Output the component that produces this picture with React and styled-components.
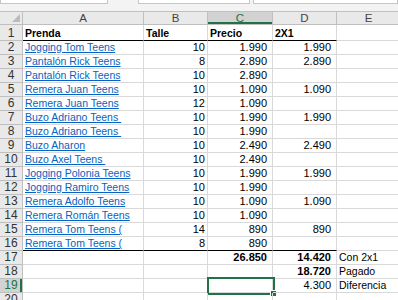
import React from 'react';
import styled, { createGlobalStyle } from 'styled-components';

const COLS = '23px 121px 64px 65px 64px 64px';
const GRID = '#d9d9d9';
const HEAD_LINE = '#bfbfbf';
const GREEN = '#217346';

const Global = createGlobalStyle`
  html, body { margin: 0; padding: 0; background: #fff; }
  body { font-family: 'Liberation Sans', Arial, sans-serif; }
`;

const Sheet = styled.div`
  width: 398px;
  height: 300px;
  overflow: hidden;
  display: flex;
  flex-direction: column;
  background: #fff;
`;

const TopStrip = styled.div`
  height: 12px;
  flex: none;
  display: flex;
  gap: 3px;
  background: #f3f3f3;
  border-bottom: 1px solid ${HEAD_LINE};
  box-sizing: border-box;
`;

const InputBox = styled.div`
  height: 3px;
  width: ${(p) => p.$w}px;
  flex: ${(p) => (p.$grow ? 1 : 'none')};
  margin-left: ${(p) => p.$ml || 0}px;
  background: #fff;
  border: 1px solid #c6c6c6;
  border-top: none;
`;

const Row = styled.div`
  display: grid;
  grid-template-columns: ${COLS};
  height: ${(p) => p.$h}px;
  flex: none;
`;

const Corner = styled.div`
  background: #e9e9e9;
  border-right: 1px solid ${HEAD_LINE};
  border-bottom: 1px solid ${HEAD_LINE};
  display: flex;
  align-items: flex-end;
  justify-content: flex-end;
  padding: 0 2px 2px 0;
`;

const ColHead = styled.div`
  background: ${(p) => (p.$active ? '#d2d2d2' : '#e9e9e9')};
  color: ${(p) => (p.$active ? GREEN : '#444')};
  border-right: 1px solid ${HEAD_LINE};
  border-bottom: 1px solid ${HEAD_LINE};
  box-shadow: ${(p) => (p.$active ? `inset 0 -2px 0 ${GREEN}` : 'none')};
  font-size: 11.5px;
  display: flex;
  align-items: center;
  justify-content: center;
`;

const RowHead = styled.div`
  background: ${(p) => (p.$active ? '#d2d2d2' : '#e9e9e9')};
  color: ${(p) => (p.$active ? GREEN : '#333')};
  border-right: 1px solid ${HEAD_LINE};
  border-bottom: 1px solid ${HEAD_LINE};
  box-shadow: ${(p) => (p.$active ? `inset -2px 0 0 ${GREEN}` : 'none')};
  font-size: 12px;
  display: flex;
  align-items: flex-end;
  justify-content: center;
  line-height: 13px;
`;

const Cell = styled.div`
  position: relative;
  border-right: 1px solid ${GRID};
  border-bottom: 1px solid ${(p) => (p.$rule ? '#000' : GRID)};
  display: flex;
  align-items: flex-end;
  justify-content: ${(p) => (p.$num ? 'flex-end' : 'flex-start')};
  padding: ${(p) => (p.$num ? `0 ${p.$pad ?? 5}px 0 0` : '0 0 0 2px')};
  font-size: ${(p) => (p.$num ? 11 : 10.5)}px;
  font-weight: ${(p) => (p.$bold ? 700 : 400)};
  line-height: 13px;
  color: #000;
  white-space: pre;
`;

const Link = styled.a`
  color: #0563c1;
  text-decoration: underline;
  white-space: pre;
`;

const Selection = styled.div`
  position: absolute;
  left: -1px;
  top: -2px;
  right: -3px;
  bottom: -3px;
  border: 2px solid ${GREEN};
  pointer-events: none;
`;

const Handle = styled.div`
  position: absolute;
  right: -4px;
  bottom: -4px;
  width: 5px;
  height: 5px;
  background: ${GREEN};
  border: 1px solid #fff;
`;

const items = [
  ['Jogging Tom Teens', '10', '1.990', '1.990'],
  ['Pantalón Rick Teens', '8', '2.890', '2.890'],
  ['Pantalón Rick Teens', '10', '2.890', ''],
  ['Remera Juan Teens', '10', '1.090', '1.090'],
  ['Remera Juan Teens', '12', '1.090', ''],
  ['Buzo Adriano Teens ', '10', '1.990', '1.990'],
  ['Buzo Adriano Teens ', '10', '1.990', ''],
  ['Buzo Aharon', '10', '2.490', '2.490'],
  ['Buzo Axel Teens ', '10', '2.490', ''],
  ['Jogging Polonia Teens', '10', '1.990', '1.990'],
  ['Jogging Ramiro Teens', '10', '1.990', ''],
  ['Remera Adolfo Teens', '10', '1.090', '1.090'],
  ['Remera Román Teens', '10', '1.090', ''],
  ['Remera Tom Teens (', '14', '890', '890'],
  ['Remera Tom Teens (', '8', '890', ''],
];

const Triangle = () => (
  <svg width="8" height="8" viewBox="0 0 8 8">
    <polygon points="8,0 8,8 0,8" fill="#bcbcbc" />
  </svg>
);

export default function App() {
  return (
    <>
      <Global />
      <Sheet>
        <TopStrip>
          <InputBox $w={106} />
          <InputBox $w={110} $ml={27} />
          <InputBox $grow />
        </TopStrip>

        <Row $h={13}>
          <Corner>
            <Triangle />
          </Corner>
          <ColHead>A</ColHead>
          <ColHead>B</ColHead>
          <ColHead $active>C</ColHead>
          <ColHead>D</ColHead>
          <ColHead>E</ColHead>
        </Row>

        <Row $h={16}>
          <RowHead>1</RowHead>
          <Cell $rule $bold>Prenda</Cell>
          <Cell $rule $bold>Talle</Cell>
          <Cell $rule $bold>Precio</Cell>
          <Cell $rule $bold>2X1</Cell>
          <Cell />
        </Row>

        {items.map(([name, size, price, promo], i) => {
          const last = i === items.length - 1;
          return (
            <Row $h={14} key={i}>
              <RowHead>{i + 2}</RowHead>
              <Cell $rule={last}>
                <Link>{name}</Link>
              </Cell>
              <Cell $rule={last} $num $pad={2}>
                {size}
              </Cell>
              <Cell $rule={last} $num>
                {price}
              </Cell>
              <Cell $rule={last} $num>
                {promo}
              </Cell>
              <Cell />
            </Row>
          );
        })}

        <Row $h={14}>
          <RowHead>17</RowHead>
          <Cell />
          <Cell />
          <Cell $num $bold>26.850</Cell>
          <Cell $num $bold>14.420</Cell>
          <Cell>Con 2x1</Cell>
        </Row>
        <Row $h={14}>
          <RowHead>18</RowHead>
          <Cell />
          <Cell />
          <Cell />
          <Cell $num $bold>18.720</Cell>
          <Cell>Pagado</Cell>
        </Row>
        <Row $h={14}>
          <RowHead $active>19</RowHead>
          <Cell />
          <Cell />
          <Cell>
            <Selection>
              <Handle />
            </Selection>
          </Cell>
          <Cell $num>4.300</Cell>
          <Cell>Diferencia</Cell>
        </Row>
        <Row $h={14}>
          <RowHead>20</RowHead>
          <Cell />
          <Cell />
          <Cell />
          <Cell />
          <Cell />
        </Row>
      </Sheet>
    </>
  );
}
